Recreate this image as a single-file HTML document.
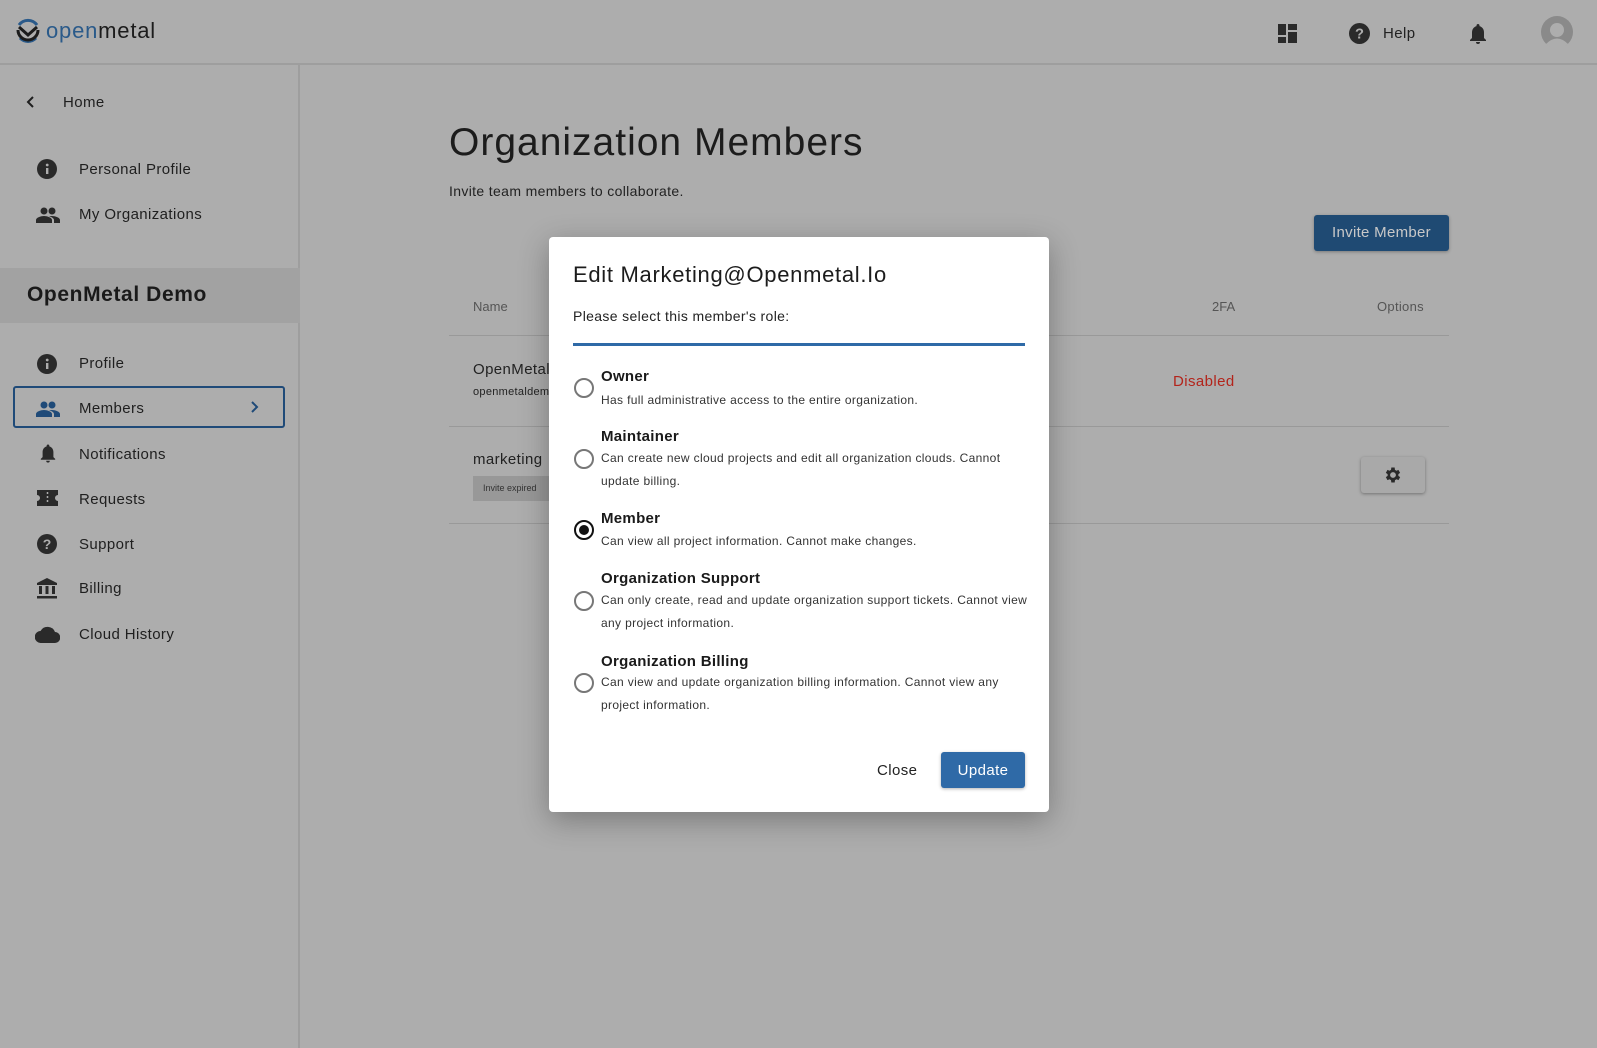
<!DOCTYPE html>
<html><head><meta charset="utf-8"><style>
*{box-sizing:border-box;margin:0;padding:0}
body{width:1597px;height:1048px;overflow:hidden;background:#adadad;font-family:"Liberation Sans",sans-serif;color:#222;position:relative}
.abs{position:absolute;white-space:nowrap}
.hdr{position:absolute;left:0;top:0;width:1597px;height:65px;border-bottom:2px solid #9e9e9e}
.side{position:absolute;left:0;top:65px;width:300px;height:983px;border-right:2px solid #9e9e9e}
.nav{font-size:15px;color:#1f1f1f;letter-spacing:.4px}
.ic{position:absolute}
.modal{position:absolute;left:549px;top:237px;width:500px;height:575px;background:#fff;border-radius:4px;box-shadow:0 8px 30px rgba(0,0,0,.3)}
.h{font-weight:bold;font-size:15px;color:#1a1a1a;letter-spacing:.3px}
.d{font-size:12px;color:#333;letter-spacing:.35px}
.radio{position:absolute;left:25px;width:20px;height:20px;border:2px solid #777;border-radius:50%}
</style></head><body>
<div class="hdr">
 <svg class="ic" style="left:14px;top:17px" width="28" height="28" viewBox="0 0 28 28"><path d="M5 8 A11 11 0 0 1 23 8" stroke="#2a5a8a" stroke-width="3" fill="none"/><path d="M6 21 A11 11 0 0 0 22 21" stroke="#2a5a8a" stroke-width="3" fill="none"/><path d="M4 13 A10 10 0 0 0 24 13 M5 10 L14 18 L23 10" stroke="#1c1c1c" stroke-width="3" fill="none"/></svg>
 <div class="abs" style="left:46px;top:18px;font-size:22px;letter-spacing:.8px"><span style="color:#2a5a8a">open</span><span style="color:#1c1c1c">metal</span></div>
 <svg class="ic" style="left:1278px;top:24px" width="19" height="19" viewBox="0 0 19 19"><rect x="0" y="0" width="8" height="11" fill="#2a2a2a"/><rect x="10" y="0" width="9" height="6" fill="#2a2a2a"/><rect x="10" y="8" width="9" height="11" fill="#2a2a2a"/><rect x="0" y="13" width="8" height="6" fill="#2a2a2a"/></svg>
 <svg class="ic" style="left:1349px;top:23px" width="21" height="21" viewBox="0 0 20 20"><circle cx="10" cy="10" r="10" fill="#2a2a2a"/><text x="10" y="15" font-size="14" font-weight="bold" fill="#adadad" text-anchor="middle" font-family="Liberation Sans">?</text></svg>
 <div class="abs" style="left:1383px;top:25px;font-size:15px;letter-spacing:.4px">Help</div>
 <svg class="ic" style="left:1468px;top:23px" width="20" height="22" viewBox="0 0 20 22"><path d="M10 1c-1 0-1.5.7-1.5 1.5v.6C5.5 4 4 6.5 4 9.5V15l-2 2v1h16v-1l-2-2V9.5c0-3-1.5-5.5-4.5-6.4v-.6C11.5 1.7 11 1 10 1z M8 19a2 2 0 0 0 4 0z" fill="#2a2a2a"/></svg>
 <svg class="ic" style="left:1541px;top:16px" width="32" height="32" viewBox="0 0 32 32"><circle cx="16" cy="16" r="16" fill="#8a8a8a"/><circle cx="16" cy="14" r="7" fill="#adadad"/><path d="M5 28 Q16 17 27 28 A16 16 0 0 1 5 28z" fill="#adadad"/></svg>
</div>
<div class="side">
 <svg class="ic" style="left:26px;top:30px" width="10" height="14" viewBox="0 0 10 14"><path d="M7 2L2 7l5 5" stroke="#1f1f1f" stroke-width="2" fill="none"/></svg>
 <div class="abs nav" style="left:63px;top:29px">Home</div>
 <svg class="ic" style="left:37px;top:94px" width="20" height="20" viewBox="0 0 20 20"><circle cx="10" cy="10" r="10" fill="#2a2a2a"/><rect x="9" y="9" width="2.4" height="6" fill="#adadad"/><circle cx="10.2" cy="6" r="1.4" fill="#adadad"/></svg>
 <div class="abs nav" style="left:79px;top:96px">Personal Profile</div>
 <svg class="ic" style="left:36px;top:142px" width="24" height="16" viewBox="0 0 24 16"><circle cx="8" cy="4" r="3.5" fill="#2a2a2a"/><circle cx="16" cy="4" r="3.5" fill="#2a2a2a"/><path d="M0 16v-3c0-2.5 5-4 8-4s8 1.5 8 4v3z M13 9.5c1-.3 2-.5 3-.5 3 0 8 1.5 8 4v3h-6v-3c0-1.5-2-3-5-3.5z" fill="#2a2a2a"/></svg>
 <div class="abs nav" style="left:79px;top:141px">My Organizations</div>
 <div class="abs" style="left:0;top:203px;width:300px;height:55px;background:#a2a2a2"></div>
 <div class="abs" style="left:27px;top:218px;font-size:21px;font-weight:bold;color:#1a1a1a;letter-spacing:.6px">OpenMetal Demo</div>
 <svg class="ic" style="left:37px;top:289px" width="20" height="20" viewBox="0 0 20 20"><circle cx="10" cy="10" r="10" fill="#2a2a2a"/><rect x="9" y="9" width="2.4" height="6" fill="#adadad"/><circle cx="10.2" cy="6" r="1.4" fill="#adadad"/></svg>
 <div class="abs nav" style="left:79px;top:290px">Profile</div>
 <div class="abs" style="left:13px;top:321px;width:272px;height:42px;border:2px solid #1f4a78;border-radius:3px"></div>
 <svg class="ic" style="left:36px;top:336px" width="24" height="16" viewBox="0 0 24 16"><circle cx="8" cy="4" r="3.5" fill="#1f4a78"/><circle cx="16" cy="4" r="3.5" fill="#1f4a78"/><path d="M0 16v-3c0-2.5 5-4 8-4s8 1.5 8 4v3z M13 9.5c1-.3 2-.5 3-.5 3 0 8 1.5 8 4v3h-6v-3c0-1.5-2-3-5-3.5z" fill="#1f4a78"/></svg>
 <div class="abs nav" style="left:79px;top:335px">Members</div>
 <svg class="ic" style="left:250px;top:335px" width="10" height="14" viewBox="0 0 10 14"><path d="M2 2l5 5-5 5" stroke="#1f4a78" stroke-width="2" fill="none"/></svg>
 <svg class="ic" style="left:39px;top:378px" width="18" height="21" viewBox="0 0 20 22"><path d="M10 1c-1 0-1.5.7-1.5 1.5v.6C5.5 4 4 6.5 4 9.5V15l-2 2v1h16v-1l-2-2V9.5c0-3-1.5-5.5-4.5-6.4v-.6C11.5 1.7 11 1 10 1z M8 19a2 2 0 0 0 4 0z" fill="#2a2a2a"/></svg>
 <div class="abs nav" style="left:79px;top:381px">Notifications</div>
 <svg class="ic" style="left:37px;top:425px" width="21" height="16" viewBox="0 0 21 16"><path d="M0 0h21v5a3 3 0 0 0 0 6v5H0v-5a3 3 0 0 0 0-6z" fill="#2a2a2a"/><path d="M10.5 2v12" stroke="#adadad" stroke-width="1.5" stroke-dasharray="2 2"/></svg>
 <div class="abs nav" style="left:79px;top:426px">Requests</div>
 <svg class="ic" style="left:37px;top:469px" width="20" height="20" viewBox="0 0 20 20"><circle cx="10" cy="10" r="10" fill="#2a2a2a"/><text x="10" y="15" font-size="14" font-weight="bold" fill="#adadad" text-anchor="middle" font-family="Liberation Sans">?</text></svg>
 <div class="abs nav" style="left:79px;top:471px">Support</div>
 <svg class="ic" style="left:37px;top:513px" width="20" height="21" viewBox="0 0 20 21"><path d="M10 0L0 5v2h20V5z" fill="#2a2a2a"/><rect x="2" y="8" width="3" height="8" fill="#2a2a2a"/><rect x="8.5" y="8" width="3" height="8" fill="#2a2a2a"/><rect x="15" y="8" width="3" height="8" fill="#2a2a2a"/><rect x="0" y="18" width="20" height="2.5" fill="#2a2a2a"/></svg>
 <div class="abs nav" style="left:79px;top:515px">Billing</div>
 <svg class="ic" style="left:35px;top:561px" width="25" height="17" viewBox="0 0 25 17"><path d="M6 17a6 6 0 0 1-.5-12A8 8 0 0 1 20 6a5.5 5.5 0 0 1-.5 11z" fill="#2a2a2a"/></svg>
 <div class="abs nav" style="left:79px;top:561px">Cloud History</div>
</div>
<div class="abs" style="left:449px;top:121px;font-size:39px;color:#1c1c1c;letter-spacing:1px">Organization Members</div>
<div class="abs" style="left:449px;top:183px;font-size:14px;color:#222;letter-spacing:.35px">Invite team members to collaborate.</div>
<div class="abs" style="left:1314px;top:215px;width:135px;height:36px;background:#1f4a73;border-radius:3px;color:#c8c8c8;font-size:15px;text-align:center;line-height:36px;box-shadow:0 1px 3px rgba(0,0,0,.3);letter-spacing:.3px">Invite Member</div>
<div class="abs" style="left:473px;top:299px;font-size:13px;color:#555">Name</div>
<div class="abs" style="left:1212px;top:299px;font-size:13px;color:#555">2FA</div>
<div class="abs" style="left:1377px;top:299px;font-size:13px;color:#555;letter-spacing:.3px">Options</div>
<div class="abs" style="left:449px;top:335px;width:1000px;height:1px;background:#999"></div>
<div class="abs" style="left:473px;top:361px;font-size:15px;letter-spacing:.4px">OpenMetal</div>
<div class="abs" style="left:473px;top:386px;font-size:11px;letter-spacing:.3px">openmetaldemo</div>
<div class="abs" style="left:1173px;top:373px;font-size:15px;color:#b3241b;letter-spacing:.4px">Disabled</div>
<div class="abs" style="left:449px;top:426px;width:1000px;height:1px;background:#999"></div>
<div class="abs" style="left:473px;top:451px;font-size:15px;letter-spacing:.4px">marketing</div>
<div class="abs" style="left:473px;top:476px;width:80px;height:25px;background:#989898;font-size:9px;line-height:25px;padding-left:10px;color:#333">Invite expired</div>
<div class="abs" style="left:1361px;top:457px;width:64px;height:36px;background:#a9a9a9;border-radius:3px;box-shadow:0 1px 3px rgba(0,0,0,.35)"></div>
<svg class="ic" style="left:1383px;top:465px" width="20" height="20" viewBox="0 0 24 24"><path fill="#2a2a2a" d="M19.4 13a7.5 7.5 0 0 0 0-2l2.1-1.6-2-3.5-2.5 1a7 7 0 0 0-1.7-1L15 3h-4l-.4 2.9a7 7 0 0 0-1.7 1l-2.5-1-2 3.5L6.6 11a7.5 7.5 0 0 0 0 2l-2.2 1.6 2 3.5 2.5-1a7 7 0 0 0 1.7 1L11 21h4l.4-2.9a7 7 0 0 0 1.7-1l2.5 1 2-3.5zM13 15.5a3.5 3.5 0 1 1 0-7 3.5 3.5 0 0 1 0 7z" transform="translate(-1 0)"/></svg>
<div class="abs" style="left:449px;top:523px;width:1000px;height:1px;background:#999"></div>

<div class="modal">
 <div class="abs" style="left:24px;top:25px;font-size:22px;color:#1c1c1c;letter-spacing:.7px">Edit Marketing@Openmetal.Io</div>
 <div class="abs" style="left:24px;top:71px;font-size:14px;color:#222;letter-spacing:.35px">Please select this member's role:</div>
 <div class="abs" style="left:24px;top:106px;width:452px;height:3px;background:#2f6aa7"></div>

 <div class="radio" style="top:141px"></div>
 <div class="abs h" style="left:52px;top:131px">Owner</div>
 <div class="abs d" style="left:52px;top:156px">Has full administrative access to the entire organization.</div>

 <div class="radio" style="top:212px"></div>
 <div class="abs h" style="left:52px;top:191px">Maintainer</div>
 <div class="abs d" style="left:52px;top:214px">Can create new cloud projects and edit all organization clouds. Cannot</div>
 <div class="abs d" style="left:52px;top:237px">update billing.</div>

 <div class="radio" style="top:283px;border-color:#111"><div style="position:absolute;left:3px;top:3px;width:10px;height:10px;border-radius:50%;background:#111"></div></div>
 <div class="abs h" style="left:52px;top:273px">Member</div>
 <div class="abs d" style="left:52px;top:297px">Can view all project information. Cannot make changes.</div>

 <div class="radio" style="top:354px"></div>
 <div class="abs h" style="left:52px;top:333px">Organization Support</div>
 <div class="abs d" style="left:52px;top:356px">Can only create, read and update organization support tickets. Cannot view</div>
 <div class="abs d" style="left:52px;top:379px">any project information.</div>

 <div class="radio" style="top:436px"></div>
 <div class="abs h" style="left:52px;top:416px">Organization Billing</div>
 <div class="abs d" style="left:52px;top:438px">Can view and update organization billing information. Cannot view any</div>
 <div class="abs d" style="left:52px;top:461px">project information.</div>

 <div class="abs" style="left:328px;top:525px;font-size:15px;color:#222;letter-spacing:.4px">Close</div>
 <div class="abs" style="left:392px;top:515px;width:84px;height:36px;background:#2f6aa7;border-radius:3px;color:#fff;font-size:15px;text-align:center;line-height:37px;box-shadow:0 1px 3px rgba(0,0,0,.3);letter-spacing:.4px">Update</div>
</div>
</body></html>
